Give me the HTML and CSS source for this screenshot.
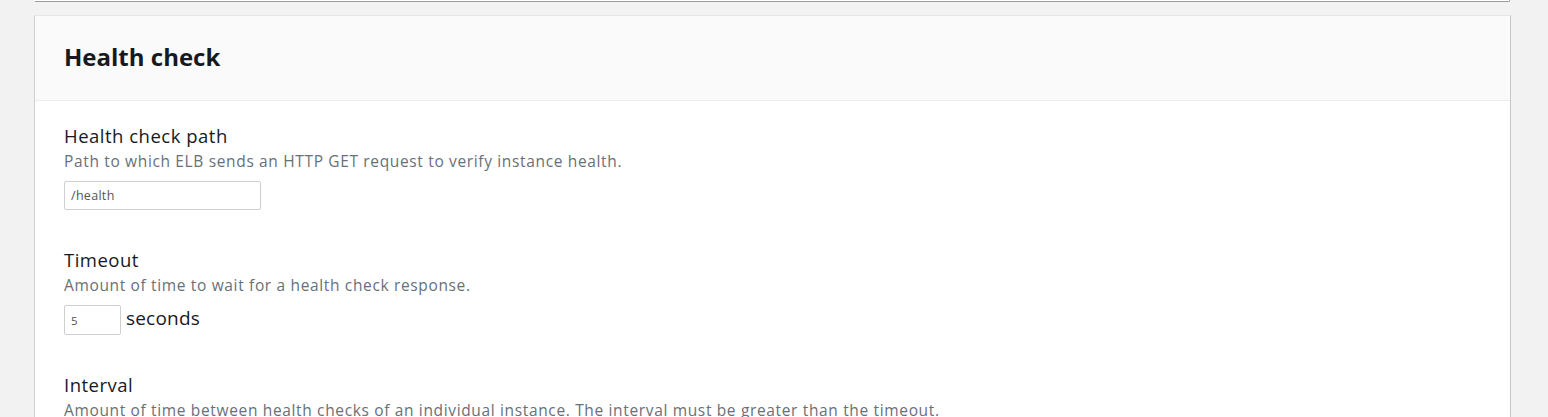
FILE: index.html
```html
<!DOCTYPE html>
<html lang="en">
<head>
<meta charset="utf-8">
<title>Health check</title>
<link rel="stylesheet" href="styles.css">
</head>
<body>
<div class="page">
  <div class="prev-card"></div>
  <section class="card">
    <header class="card-header">
      <h2 class="card-title">Health check</h2>
    </header>
    <div class="card-body">
      <div class="field">
        <div class="label">Health check path</div>
        <div class="desc">Path to which ELB sends an HTTP GET request to verify instance health.</div>
        <div class="control">
          <input class="input input-path" type="text" value="/health">
        </div>
      </div>
      <div class="field">
        <div class="label">Timeout</div>
        <div class="desc">Amount of time to wait for a health check response.</div>
        <div class="control">
          <input class="input input-num" type="text" value="5">
          <span class="unit">seconds</span>
        </div>
      </div>
      <div class="field">
        <div class="label">Interval</div>
        <div class="desc">Amount of time between health checks of an individual instance. The interval must be greater than the timeout.</div>
      </div>
    </div>
  </section>
</div>
</body>
</html>
```
FILE: styles.css
```css
html, body {
  margin: 0;
  padding: 0;
  background: #f2f2f2;
  font-family: "Open Sans", "Noto Sans", sans-serif;
  color: #16191f;
}
.page {
  padding: 0 37px 0 34px;
  height: 417px;
  overflow: hidden;
}
.prev-card {
  height: 1px;
  margin: 0 1px;
  background: #fff;
  border-bottom: 1px solid #9a9a9a;
  border-right: 1px solid #9a9a9a;
  border-bottom-right-radius: 2px;
}
.card {
  margin-top: 13px;
  background: #fff;
  border-left: 1px solid #d0d0d0;
  border-right: 1px solid #c8c8c8;
  border-top: 1px solid #e6e6e6;
}
.card-header {
  box-sizing: border-box;
  background: #fafafa;
  border-bottom: 1px solid #eaeded;
  height: 85px;
  display: flex;
  align-items: center;
  padding: 0 29px 4px;
}
.card-title {
  margin: 0;
  font-size: 24px;
  font-weight: 700;
  color: #16191f;
  letter-spacing: 0;
}
.card-body {
  padding: 24px 29px;
  display: flex;
  flex-direction: column;
  gap: 39px;
}
.label {
  font-size: 18.5px;
  line-height: 22px;
  letter-spacing: 0.5px;
  color: #16191f;
}
.desc {
  font-size: 15.5px;
  line-height: 20px;
  letter-spacing: 0.65px;
  margin-top: 4px;
  color: #687078;
}
.control {
  margin-top: 10px;
  display: flex;
  align-items: center;
  gap: 5px;
}
.input {
  box-sizing: border-box;
  height: 29px;
  border: 1px solid #cfcfcf;
  border-radius: 2px;
  background: #fff;
  font-family: "Open Sans", "Noto Sans", sans-serif;
  font-size: 12.5px;
  letter-spacing: 0.3px;
  color: #555;
  padding: 0 6px;
  margin: 0;
  outline: none;
}
.input-path {
  width: 197px;
}
.input-num {
  width: 57px;
  height: 30px;
  font-size: 11.5px;
}
.unit {
  font-size: 19px;
  line-height: 24px;
  letter-spacing: 0.2px;
  margin-bottom: 4px;
  color: #16191f;
}
```
